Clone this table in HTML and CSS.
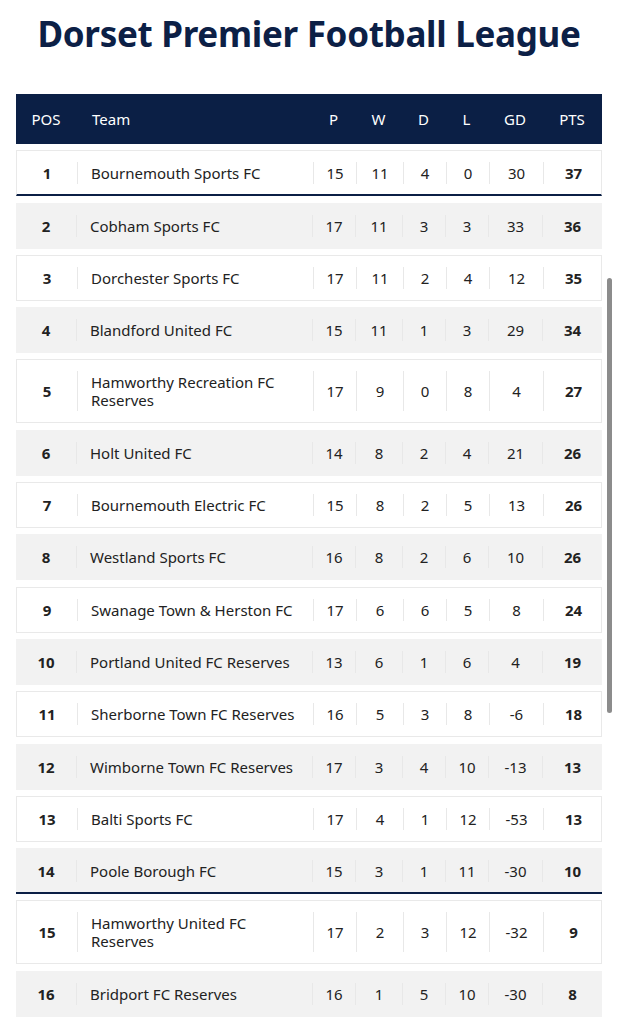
FILE: index.html
```html
<!DOCTYPE html>
<html lang="en">
<head>
<meta charset="utf-8">
<title>Dorset Premier Football League</title>
<link rel="stylesheet" href="styles.css">
</head>
<body>
<main class="page">
  <h1 class="title">Dorset Premier Football League</h1>
  <div class="table">
    <div class="head">
      <div class="hc">POS</div>
      <div class="hc team">Team</div>
      <div class="hc">P</div>
      <div class="hc">W</div>
      <div class="hc">D</div>
      <div class="hc">L</div>
      <div class="hc">GD</div>
      <div class="hc">PTS</div>
    </div>
    <div class="row white line"><div class="c pos">1</div><div class="c team">Bournemouth Sports FC</div><div class="c">15</div><div class="c">11</div><div class="c">4</div><div class="c">0</div><div class="c">30</div><div class="c pts">37</div></div>
    <div class="row grey"><div class="c pos">2</div><div class="c team">Cobham Sports FC</div><div class="c">17</div><div class="c">11</div><div class="c">3</div><div class="c">3</div><div class="c">33</div><div class="c pts">36</div></div>
    <div class="row white"><div class="c pos">3</div><div class="c team">Dorchester Sports FC</div><div class="c">17</div><div class="c">11</div><div class="c">2</div><div class="c">4</div><div class="c">12</div><div class="c pts">35</div></div>
    <div class="row grey"><div class="c pos">4</div><div class="c team">Blandford United FC</div><div class="c">15</div><div class="c">11</div><div class="c">1</div><div class="c">3</div><div class="c">29</div><div class="c pts">34</div></div>
    <div class="row white"><div class="c pos">5</div><div class="c team">Hamworthy Recreation FC Reserves</div><div class="c">17</div><div class="c">9</div><div class="c">0</div><div class="c">8</div><div class="c">4</div><div class="c pts">27</div></div>
    <div class="row grey"><div class="c pos">6</div><div class="c team">Holt United FC</div><div class="c">14</div><div class="c">8</div><div class="c">2</div><div class="c">4</div><div class="c">21</div><div class="c pts">26</div></div>
    <div class="row white"><div class="c pos">7</div><div class="c team">Bournemouth Electric FC</div><div class="c">15</div><div class="c">8</div><div class="c">2</div><div class="c">5</div><div class="c">13</div><div class="c pts">26</div></div>
    <div class="row grey"><div class="c pos">8</div><div class="c team">Westland Sports FC</div><div class="c">16</div><div class="c">8</div><div class="c">2</div><div class="c">6</div><div class="c">10</div><div class="c pts">26</div></div>
    <div class="row white"><div class="c pos">9</div><div class="c team">Swanage Town &amp; Herston FC</div><div class="c">17</div><div class="c">6</div><div class="c">6</div><div class="c">5</div><div class="c">8</div><div class="c pts">24</div></div>
    <div class="row grey"><div class="c pos">10</div><div class="c team">Portland United FC Reserves</div><div class="c">13</div><div class="c">6</div><div class="c">1</div><div class="c">6</div><div class="c">4</div><div class="c pts">19</div></div>
    <div class="row white"><div class="c pos">11</div><div class="c team">Sherborne Town FC Reserves</div><div class="c">16</div><div class="c">5</div><div class="c">3</div><div class="c">8</div><div class="c">-6</div><div class="c pts">18</div></div>
    <div class="row grey"><div class="c pos">12</div><div class="c team">Wimborne Town FC Reserves</div><div class="c">17</div><div class="c">3</div><div class="c">4</div><div class="c">10</div><div class="c">-13</div><div class="c pts">13</div></div>
    <div class="row white"><div class="c pos">13</div><div class="c team">Balti Sports FC</div><div class="c">17</div><div class="c">4</div><div class="c">1</div><div class="c">12</div><div class="c">-53</div><div class="c pts">13</div></div>
    <div class="row grey line"><div class="c pos">14</div><div class="c team">Poole Borough FC</div><div class="c">15</div><div class="c">3</div><div class="c">1</div><div class="c">11</div><div class="c">-30</div><div class="c pts">10</div></div>
    <div class="row white"><div class="c pos">15</div><div class="c team">Hamworthy United FC Reserves</div><div class="c">17</div><div class="c">2</div><div class="c">3</div><div class="c">12</div><div class="c">-32</div><div class="c pts">9</div></div>
    <div class="row grey"><div class="c pos">16</div><div class="c team">Bridport FC Reserves</div><div class="c">16</div><div class="c">1</div><div class="c">5</div><div class="c">10</div><div class="c">-30</div><div class="c pts">8</div></div>
  </div>
</main>
<div class="scrollbar"></div>
</body>
</html>
```
FILE: styles.css
```css
html, body {
  margin: 0;
  padding: 0;
  background: #ffffff;
}
body {
  font-family: "Noto Sans", "Open Sans", sans-serif;
  color: #222222;
  overflow: hidden;
}
.page {
  padding: 0 16px;
}
.title {
  margin: 0;
  height: 94px;
  padding-top: 11px;
  box-sizing: border-box;
  text-align: center;
  font-size: 35px;
  line-height: 46px;
  font-weight: 700;
  color: #0c2046;
  letter-spacing: -0.3px;
}
.table {
  display: flex;
  flex-direction: column;
  gap: 6.3px;
}
.head, .row {
  display: grid;
  grid-template-columns: 60px 236px 43px 47px 43px 43px 54px 60px;
  align-items: center;
}
.head {
  background: #0b1f45;
  color: #ffffff;
  height: 50px;
  font-size: 15px;
}
.hc {
  text-align: center;
}
.hc.team {
  text-align: left;
  padding-left: 16px;
}
.row {
  box-sizing: border-box;
  padding: 12px 0;
  font-size: 15px;
  line-height: 18px;
}
.row.white {
  background: #ffffff;
  border: 1px solid #e9e9e9;
  padding: 11px 0;
}
.row.grey {
  background: #f2f2f2;
}
.row.line {
  border-bottom: 2px solid #0b1f45;
  padding-bottom: 10px;
}
.row.white.line {
  padding-bottom: 10px;
}
.c {
  align-self: stretch;
  display: flex;
  align-items: center;
  justify-content: center;
  padding: 2px 0;
  border-left: 1px solid #e8e8e8;
  text-align: center;
}
.c.pos {
  border-left: none;
  font-weight: 700;
}
.c.team {
  justify-content: flex-start;
  text-align: left;
  padding-left: 13px;
  padding-right: 8px;
}
.c.pts {
  font-weight: 700;
}
.scrollbar {
  position: fixed;
  left: 607px;
  top: 278px;
  width: 5px;
  height: 435px;
  border-radius: 3px;
  background: #8c8c8c;
}
```
